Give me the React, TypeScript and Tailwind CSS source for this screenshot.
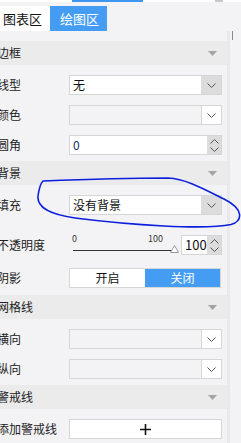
import { ReactNode } from 'react'

const font = { fontFamily: '"Noto Sans CJK SC", "Liberation Sans", sans-serif' }

function Chevron({ up = false }: { up?: boolean }) {
  return (
    <svg width="9" height="5" viewBox="0 0 9 5" className={up ? 'rotate-180' : ''}>
      <path d="M0.5 0.5 L4.5 4.5 L8.5 0.5" fill="none" stroke="#555" strokeWidth="1" />
    </svg>
  )
}

function Section({ title }: { title: string }) {
  return (
    <div className="h-6 bg-[#ebebeb] flex items-center justify-between pr-[10px]">
      <span className="-ml-[3px] text-[12px] text-[#222]">{title}</span>
      <svg width="9" height="5" viewBox="0 0 9 5">
        <path d="M0 0 H9 L4.5 5 Z" fill="#a3a3a3" />
      </svg>
    </div>
  )
}

function Row({ label, children, className = 'mt-[10px]' }: { label: string; children: ReactNode; className?: string }) {
  return (
    <div className={`h-5 flex items-center ${className}`}>
      <span className="w-[72px] shrink-0 -ml-[3px] text-[12px] text-[#222]">{label}</span>
      <div className="w-[155px] h-5 pr-[2px]">{children}</div>
    </div>
  )
}

function Select({ value, disabled = false }: { value?: string; disabled?: boolean }) {
  return (
    <div className={`h-5 flex border border-[#d6d6d6] ${disabled ? 'bg-[#f3f3f5]' : 'bg-white'}`}>
      <div className="flex-1 flex items-center pl-[3px] text-[12px] text-[#111]">{value}</div>
      <div className={`w-5 flex items-center justify-center ${disabled ? 'bg-white border-l border-[#d6d6d6]' : 'bg-[#dcdcdc]'}`}>
        <Chevron />
      </div>
    </div>
  )
}

function Spinner() {
  return (
    <div className="w-[14px] bg-[#dcdcdc] flex flex-col items-center justify-center gap-[3px]">
      <Chevron up />
      <Chevron />
    </div>
  )
}

export default function App() {
  return (
    <div className="relative w-[241px] h-[443px] overflow-hidden bg-[#f3f3f5]" style={font}>
      {/* top strip */}
      <div className="h-[2px] flex bg-white">
        <div className="w-[72px]" />
        <div className="w-[71px] bg-[#3f96f2]" />
        <div className="w-[72px]" />
        <div className="w-[8px] bg-[#c8c8c8]" />
      </div>

      {/* tabs */}
      <div className="mt-[4px] h-[25px] flex text-[13px]">
        <div className="w-[50px] bg-white flex items-center pl-[3px] text-[#111]">图表区</div>
        <div className="w-[57px] bg-[#459df3] flex items-center pl-[10px] text-white">绘图区</div>
      </div>

      <div className="flex">
        <div className="w-[227px] shrink-0 pt-[10px] pb-2">
          <Section title="边框" />
          <Row label="线型">
            <Select value="无" />
          </Row>
          <Row label="颜色">
            <Select disabled />
          </Row>
          <Row label="圆角">
            <div className="h-5 flex border border-[#d6d6d6] bg-white">
              <div className="flex-1 flex items-center pl-[3px] text-[12px] text-[#1a2a6a]">0</div>
              <Spinner />
            </div>
          </Row>
          <div className="h-[6px]" />

          <Section title="背景" />
          <Row label="填充">
            <Select value="没有背景" />
          </Row>
          <Row label="不透明度" className="mt-5">
            <div className="h-5 flex">
              <div className="relative w-[112px] h-5">
                <span className="absolute left-[3px] -top-[3px] text-[9px] text-[#333]">0</span>
                <span className="absolute left-[79px] -top-[3px] text-[9px] text-[#333]">100</span>
                <div className="absolute left-[4px] top-[15px] w-[100px] h-px bg-[#333]" />
                <svg className="absolute left-[101px] top-[10px]" width="9" height="8" viewBox="0 0 9 8">
                  <path d="M4.5 0.5 L8.5 7.5 H0.5 Z" fill="white" stroke="#999" strokeWidth="1" />
                </svg>
              </div>
              <div className="flex-1 flex border border-[#d6d6d6] bg-white">
                <div className="flex-1 flex items-center pl-[3px] text-[13px] text-[#111]">100</div>
                <Spinner />
              </div>
            </div>
          </Row>
          <Row label="阴影" className="mt-[13px]">
            <div className="h-5 flex border border-[#d6d6d6] mr-[1px] text-[12px]">
              <div className="flex-1 bg-white flex items-center justify-center text-[#111]">开启</div>
              <div className="flex-1 bg-[#459df3] flex items-center justify-center text-white">关闭</div>
            </div>
          </Row>
          <div className="h-[7px]" />

          <Section title="网格线" />
          <Row label="横向">
            <Select disabled />
          </Row>
          <Row label="纵向">
            <Select disabled />
          </Row>
          <div className="h-[6px]" />

          <Section title="警戒线" />
          <Row label="添加警戒线">
            <div className="h-5 flex items-center justify-center border border-[#d6d6d6] bg-white">
              <svg width="11" height="11" viewBox="0 0 11 11">
                <path d="M5.5 0 V11 M0 5.5 H11" stroke="#111" strokeWidth="1.6" />
              </svg>
            </div>
          </Row>
        </div>
        <div className="w-[3px] bg-[#e9e9eb]" />
      </div>

      {/* scrollbar thumb */}
      <div className="absolute left-[232px] top-[31px] w-px h-[9px] bg-[#8a8a8a]" />

      {/* hand-drawn annotation */}
      <svg className="absolute left-0 top-0 pointer-events-none" width="241" height="443" viewBox="0 0 241 443">
        <path
          d="M43 181 C 80 179.5 140 178 168 178 C 186 179 202 188 224 199 C 244 209 243 221 231 224.5 C 205 230 130 225 75 218 C 48 214 37 207 38 196 C 39 189 40 184 43 181"
          fill="none"
          stroke="#0b1fdc"
          strokeWidth="1.6"
          strokeLinecap="round"
        />
      </svg>
    </div>
  )
}
